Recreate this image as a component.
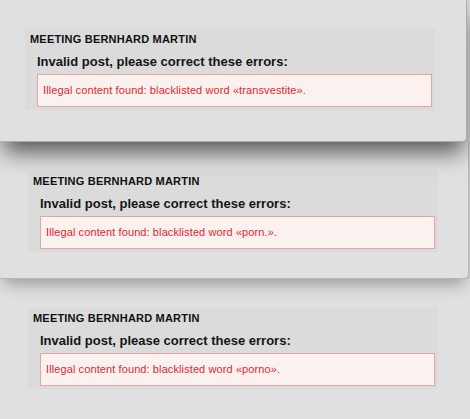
const errorDialogs = [
  {
    word: 'transvestite',
    frame: 'z-30 h-[142px] w-[467px] pl-[25px] rounded-br-[5px] border-r border-b border-[#adadad] shadow-[0_14px_22px_-4px_rgba(0,0,0,0.62)]',
  },
  {
    word: 'porn.',
    frame: 'z-20 h-[137px] w-[469px] pl-[28px] rounded-br-[5px] border-r border-b border-[#b8b8b8] shadow-[0_9px_16px_-4px_rgba(0,0,0,0.32)]',
  },
  {
    word: 'porno',
    frame: 'z-10 h-[140px] w-[470px] pl-[28px]',
  },
];

function ErrorDialog({ word, frame }: { word: string; frame: string }) {
  return (
    <div className={`relative ${frame} bg-[#e0e0e0] pt-[29px]`}>
      <div className="w-[410px] bg-[#dbdbdb] pt-[4px] pr-[3px] pb-[3px]">
        <h3 className="ml-[5px] text-[11px] leading-[13px] font-bold uppercase tracking-[0.2px] text-[#111]">
          Meeting Bernhard Martin
        </h3>
        <div className="ml-[12px] mt-[8px]">
          <h2 className="text-[13px] leading-[16px] font-bold text-[#151515]">
            Invalid post, please correct these errors:
          </h2>
          <div className="mt-[4px] border border-[#e6a4a4] bg-[#fbf1ee] px-[5px] py-[9px] text-[11px] leading-[13px] tracking-[0.1px] text-[#e5262f]">
            Illegal content found: blacklisted word «{word}».
          </div>
        </div>
      </div>
    </div>
  );
}

export default function App() {
  return (
    <div
      className="h-[419px] w-[470px] overflow-hidden bg-[#d6d6d6]"
      style={{ fontFamily: '"Liberation Sans", Arial, sans-serif' }}
    >
      {errorDialogs.map((d) => (
        <ErrorDialog key={d.word} word={d.word} frame={d.frame} />
      ))}
    </div>
  );
}
